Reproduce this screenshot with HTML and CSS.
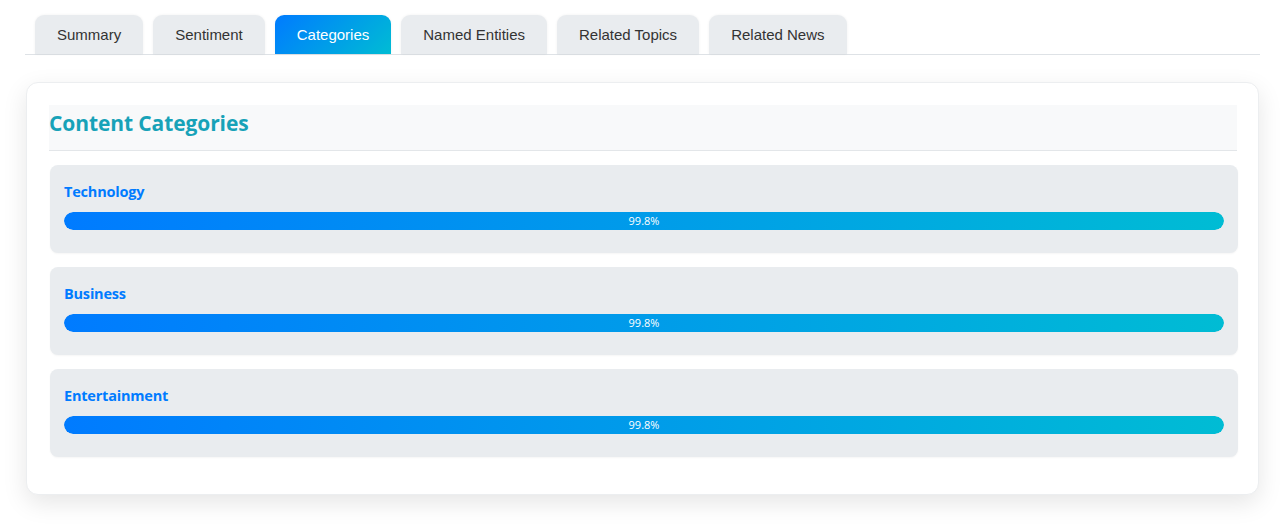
FILE: index.html
```html
<!DOCTYPE html>
<html lang="en">
<head>
<meta charset="utf-8">
<title>Categories</title>
<link rel="stylesheet" href="styles.css">
</head>
<body>
<div class="page">
  <nav class="tabs">
    <button class="tab">Summary</button>
    <button class="tab">Sentiment</button>
    <button class="tab active">Categories</button>
    <button class="tab">Named Entities</button>
    <button class="tab">Related Topics</button>
    <button class="tab">Related News</button>
  </nav>
  <section class="card">
    <h2 class="card-title">Content Categories</h2>
    <div class="cat">
      <div class="cat-name">Technology</div>
      <div class="bar"><div class="fill" style="width: 100%">99.8%</div></div>
    </div>
    <div class="cat">
      <div class="cat-name">Business</div>
      <div class="bar"><div class="fill" style="width: 100%">99.8%</div></div>
    </div>
    <div class="cat">
      <div class="cat-name">Entertainment</div>
      <div class="bar"><div class="fill" style="width: 100%">99.8%</div></div>
    </div>
  </section>
</div>
</body>
</html>
```
FILE: styles.css
```css
* { box-sizing: border-box; }
html, body { margin: 0; padding: 0; background: #fff; }
body { font-family: "Open Sans", "Noto Sans", sans-serif; color: #333; }
.page { width: 1235px; margin-left: 25px; padding-top: 15px; padding-bottom: 30px; }
.tabs {
  display: flex;
  gap: 10px;
  padding-left: 10px;
  border-bottom: 1px solid #dee2e6;
}
.tab {
  font-family: "Liberation Sans", Arial, sans-serif;
  font-size: 15px;
  color: #333;
  background: #e9ecef;
  border: none;
  border-radius: 9px 9px 0 0;
  height: 39px;
  padding: 0 22px;
  box-shadow: 0 0 3px rgba(0,0,0,0.06);
  cursor: pointer;
}
.tab.active {
  color: #fff;
  background: linear-gradient(135deg, #007bff, #00bcd4);
}
.card {
  margin-top: 27px;
  margin-left: 1px;
  width: 1233px;
  background: #fff;
  border: 1px solid #eceef0;
  border-radius: 12px;
  box-shadow: 0 8px 24px rgba(0,0,0,0.1);
  padding: 22px 21px 23px 22px;
}
.card-title {
  margin: 0 0 14px 0;
  background: #f8f9fa;
  border-bottom: 1px solid #e3e6e9;
  height: 46px;
  padding: 0;
  font-size: 21px;
  font-weight: 700;
  color: #17a2b8;
  line-height: 37px;
  letter-spacing: -0.1px;
}
.cat {
  background: #e9ecef;
  border-radius: 8px;
  padding: 16px 14px 23px 14px;
  margin: 0 -1px 14px 1px;
  box-shadow: 0 1px 2px rgba(0,0,0,0.04);
}
.cat-name {
  font-size: 14.5px;
  font-weight: 700;
  color: #007bff;
  line-height: 22px;
  margin-bottom: 9px;
  letter-spacing: -0.2px;
}
.bar {
  height: 18px;
  border-radius: 9px;
  background: #dfe3e7;
  overflow: hidden;
}
.fill {
  height: 18px;
  border-radius: 9px;
  background: linear-gradient(90deg, #007bff, #00bcd4);
  color: #fff;
  font-size: 11px;
  line-height: 18px;
  text-align: center;
}
```
